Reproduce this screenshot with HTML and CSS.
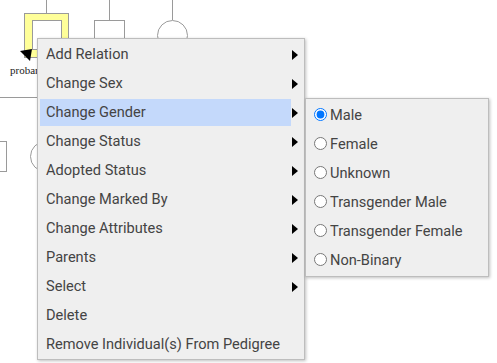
FILE: index.html
```html
<!DOCTYPE html>
<html lang="en">
<head>
  <meta charset="UTF-8">
  <title>Pedigree Editor</title>
  <link rel="stylesheet" href="styles.css">
</head>
<body>
  <!-- Pedigree canvas -->
  <svg class="canvas" width="497" height="363" viewBox="0 0 497 363">
    <g class="lines">
      <line x1="46.5" y1="0" x2="46.5" y2="13"/>
      <line x1="109.5" y1="0" x2="109.5" y2="20"/>
      <line x1="172.5" y1="0" x2="172.5" y2="20"/>
      <line x1="0" y1="97.5" x2="40" y2="97.5"/>
    </g>
    <rect class="selected" x="24.5" y="13.5" width="44" height="44"/>
    <rect class="person" x="32.5" y="20.5" width="29" height="29"/>
    <rect class="person" x="94.5" y="20.5" width="30" height="30"/>
    <circle class="person" cx="172.5" cy="35.5" r="15"/>
    <polygon class="arrow" points="20,51 32,49 30,61"/>
    <text class="label" x="10" y="74">proband</text>
    <rect class="person" x="-23.5" y="141.5" width="30" height="30"/>
    <circle class="person" cx="45.5" cy="156.5" r="15"/>
  </svg>

  <!-- Context menu -->
  <ul class="menu">
    <li><span class="item">Add Relation</span><span class="arrow-r"></span></li>
    <li><span class="item">Change Sex</span><span class="arrow-r"></span></li>
    <li><span class="item active">Change Gender</span><span class="arrow-r"></span></li>
    <li><span class="item">Change Status</span><span class="arrow-r"></span></li>
    <li><span class="item">Adopted Status</span><span class="arrow-r"></span></li>
    <li><span class="item">Change Marked By</span><span class="arrow-r"></span></li>
    <li><span class="item">Change Attributes</span><span class="arrow-r"></span></li>
    <li><span class="item">Parents</span><span class="arrow-r"></span></li>
    <li><span class="item">Select</span><span class="arrow-r"></span></li>
    <li><span class="item">Delete</span></li>
    <li><span class="item">Remove Individual(s) From Pedigree</span></li>
  </ul>

  <!-- Gender submenu -->
  <ul class="menu submenu">
    <li><label><input type="radio" name="gender" checked>Male</label></li>
    <li><label><input type="radio" name="gender">Female</label></li>
    <li><label><input type="radio" name="gender">Unknown</label></li>
    <li><label><input type="radio" name="gender">Transgender Male</label></li>
    <li><label><input type="radio" name="gender">Transgender Female</label></li>
    <li><label><input type="radio" name="gender">Non-Binary</label></li>
  </ul>
</body>
</html>
```

FILE: styles.css
```css
body {
  margin: 0;
  width: 497px;
  height: 363px;
  overflow: hidden;
  background: #fff;
  font-family: Roboto, "Liberation Sans", sans-serif;
  font-size: 14.6px;
  color: #444;
}
.canvas {
  position: absolute;
  left: 0;
  top: 0;
}
.lines line {
  stroke: #9a9a9a;
  stroke-width: 1;
}
.person {
  fill: #fff;
  stroke: #9a9a9a;
  stroke-width: 1;
}
.selected {
  fill: #ffff99;
  stroke: #9a9a9a;
  stroke-width: 1;
}
.arrow {
  fill: #000;
}
.label {
  font-family: "Liberation Serif", serif;
  font-size: 11px;
  fill: #222;
}
.menu {
  position: absolute;
  left: 37px;
  top: 38px;
  width: 266px;
  margin: 0;
  padding: 0 0 1px 0;
  list-style: none;
  background: #efefef;
  border: 1px solid #bdbdbd;
  box-shadow: 1px 1px 3px rgba(0, 0, 0, 0.25);
}
.menu li {
  display: flex;
  align-items: flex-end;
  height: 29px;
  padding-left: 2px;
}
.item {
  flex: 1;
  height: 27px;
  line-height: 27px;
  padding-left: 6px;
}
.item.active {
  background: #c4d9fb;
}
.arrow-r {
  width: 13px;
  height: 27px;
  display: flex;
  align-items: center;
  justify-content: flex-start;
}
.arrow-r::before {
  content: "";
  margin-left: 1px;
  border-left: 6px solid #000;
  border-top: 5px solid transparent;
  border-bottom: 5px solid transparent;
}
.submenu {
  left: 305px;
  top: 98px;
  width: 182px;
  padding: 1px 0 2px 0;
}
.submenu li {
  align-items: center;
  padding-left: 3px;
}
.submenu label {
  display: flex;
  align-items: center;
}
.submenu input {
  width: 13px;
  height: 13px;
  margin: 0 3px 0 5px;
}
```
